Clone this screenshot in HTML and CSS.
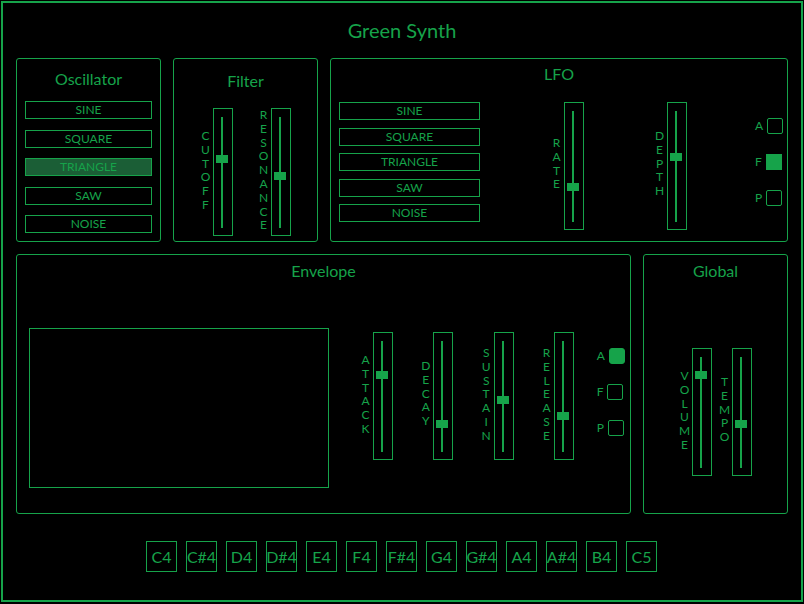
FILE: index.html
```html
<!DOCTYPE html>
<html>
<head>
<meta charset="utf-8">
<title>Green Synth</title>
<link rel="stylesheet" href="styles.css">
</head>
<body>
<div class="app">
  <h1 class="title">Green Synth</h1>

  <div class="row top">
    <section class="panel osc">
      <h2 class="ptitle">Oscillator</h2>
      <div class="btns osc-btns">
        <div class="btn">SINE</div>
        <div class="btn">SQUARE</div>
        <div class="btn active">TRIANGLE</div>
        <div class="btn">SAW</div>
        <div class="btn">NOISE</div>
      </div>
    </section>

    <section class="panel filter">
      <h2 class="ptitle">Filter</h2>
      <div class="filter-body">
        <div class="slider"><span class="vlabel">CUTOFF</span><div class="track"><span class="thumb" style="top:46px"></span></div></div>
        <div class="slider"><span class="vlabel">RESONANCE</span><div class="track"><span class="thumb" style="top:63px"></span></div></div>
      </div>
    </section>

    <section class="panel lfo">
      <h2 class="ptitle">LFO</h2>
      <div class="lfo-body">
        <div class="btns lfo-btns">
          <div class="btn">SINE</div>
          <div class="btn">SQUARE</div>
          <div class="btn">TRIANGLE</div>
          <div class="btn">SAW</div>
          <div class="btn">NOISE</div>
        </div>
        <div class="slider rate"><span class="vlabel">RATE</span><div class="track"><span class="thumb" style="top:80px"></span></div></div>
        <div class="slider depth"><span class="vlabel">DEPTH</span><div class="track"><span class="thumb" style="top:50px"></span></div></div>
        <div class="checks lfo-checks">
          <div class="check"><span>A</span><span class="box"></span></div>
          <div class="check"><span>F</span><span class="box on"></span></div>
          <div class="check"><span>P</span><span class="box"></span></div>
        </div>
      </div>
    </section>
  </div>

  <div class="row bottom">
    <section class="panel env">
      <h2 class="ptitle">Envelope</h2>
      <div class="env-body">
        <div class="canvas"></div>
        <div class="env-sliders">
          <div class="slider"><span class="vlabel">ATTACK</span><div class="track"><span class="thumb" style="top:38px"></span></div></div>
          <div class="slider"><span class="vlabel">DECAY</span><div class="track"><span class="thumb" style="top:87px"></span></div></div>
          <div class="slider"><span class="vlabel">SUSTAIN</span><div class="track"><span class="thumb" style="top:63px"></span></div></div>
          <div class="slider"><span class="vlabel">RELEASE</span><div class="track"><span class="thumb" style="top:79px"></span></div></div>
        </div>
        <div class="checks env-checks">
          <div class="check"><span>A</span><span class="box on round"></span></div>
          <div class="check"><span>F</span><span class="box"></span></div>
          <div class="check"><span>P</span><span class="box"></span></div>
        </div>
      </div>
    </section>

    <section class="panel global">
      <h2 class="ptitle">Global</h2>
      <div class="global-body">
        <div class="slider"><span class="vlabel">VOLUME</span><div class="track"><span class="thumb" style="top:22px"></span></div></div>
        <div class="slider"><span class="vlabel">TEMPO</span><div class="track"><span class="thumb" style="top:71px"></span></div></div>
      </div>
    </section>
  </div>

  <div class="keys">
    <div class="key">C4</div>
    <div class="key">C#4</div>
    <div class="key">D4</div>
    <div class="key">D#4</div>
    <div class="key">E4</div>
    <div class="key">F4</div>
    <div class="key">F#4</div>
    <div class="key">G4</div>
    <div class="key">G#4</div>
    <div class="key">A4</div>
    <div class="key">A#4</div>
    <div class="key">B4</div>
    <div class="key">C5</div>
  </div>
</div>
</body>
</html>
```

FILE: styles.css
```css
* {
  box-sizing: border-box;
  margin: 0;
  padding: 0;
}

body {
  background: #000;
  color: #16a34a;
  font-family: Lato, "Open Sans", sans-serif;
}

.app {
  margin: 1px;
  width: 802px;
  height: 601px;
  border: 2px solid #16a34a;
  padding: 0 13px;
}

.title {
  font-size: 20px;
  line-height: 24px;
  font-weight: 400;
  text-align: center;
  padding-top: 15px;
  height: 55px;
}

.row {
  display: flex;
  gap: 12px;
}

.panel {
  border: 1px solid #16a34a;
  border-radius: 3px;
}

.top .panel {
  height: 184px;
}

.bottom {
  margin-top: 12px;
}

.bottom .panel {
  height: 260px;
}

.osc,
.filter,
.global {
  width: 145px;
}

.lfo {
  width: 458px;
}

.env {
  width: 615px;
}

.ptitle {
  font-size: 16px;
  line-height: 20px;
  font-weight: 400;
  text-align: center;
}

.osc .ptitle {
  margin-top: 10px;
}

.filter .ptitle {
  margin-top: 12px;
}

.lfo .ptitle {
  margin-top: 5px;
}

.env .ptitle,
.global .ptitle {
  margin-top: 6px;
}

/* buttons */
.btns {
  display: flex;
  flex-direction: column;
}

.btn {
  height: 18px;
  border: 1px solid #16a34a;
  font-size: 12px;
  line-height: 16px;
  text-align: center;
}

.btn.active {
  background: #1b5e36;
}

.osc-btns {
  margin-top: 12px;
  padding: 0 8px;
  gap: 10.5px;
}

.lfo-btns {
  width: 141px;
  gap: 7.5px;
}

/* sliders */
.slider {
  display: flex;
  align-items: center;
  gap: 3px;
  height: 128px;
}

.vlabel {
  writing-mode: vertical-rl;
  text-orientation: upright;
  font-size: 12px;
  line-height: 10px;
  letter-spacing: -1.2px;
  padding-bottom: 6px;
}

.track {
  position: relative;
  flex: none;
  width: 20px;
  height: 128px;
  border: 1px solid #16a34a;
}

.track::before {
  content: "";
  position: absolute;
  left: 7px;
  top: 8px;
  bottom: 7px;
  width: 2px;
  background: #16a34a;
}

.thumb {
  position: absolute;
  left: 2px;
  width: 12px;
  height: 8px;
  background: #16a34a;
}

.filter-body {
  margin-top: 17px;
  display: flex;
  justify-content: center;
  gap: 25px;
}

/* LFO */
.lfo-body {
  margin-top: 18px;
  padding-left: 8px;
  display: flex;
  align-items: flex-start;
}

.rate {
  margin-left: 71px;
}

.depth {
  margin-left: 70px;
}

.lfo-checks {
  margin-left: 68px;
  margin-top: 16px;
}

/* checkboxes */
.checks {
  display: flex;
  flex-direction: column;
  gap: 20px;
}

.check {
  display: flex;
  align-items: center;
  gap: 4px;
  height: 16px;
  font-size: 12px;
  line-height: 16px;
}

.box {
  width: 16px;
  height: 16px;
  border: 1px solid #16a34a;
  border-radius: 2px;
}

.box.on {
  background: #16a34a;
  border-radius: 0;
}

.box.on.round {
  border-radius: 3px;
}

/* envelope */
.env-body {
  margin-top: 47px;
  padding-left: 12px;
  display: flex;
  align-items: flex-start;
}

.canvas {
  width: 300px;
  height: 160px;
  border: 1px solid #16a34a;
}

.env-sliders {
  display: flex;
  gap: 27.33px;
  margin-left: 31px;
  margin-top: 4px;
}

.env-checks {
  margin-left: 22.7px;
  margin-top: 20px;
}

/* global */
.global-body {
  margin-top: 67px;
  display: flex;
  justify-content: center;
  gap: 7px;
}

/* keys */
.keys {
  margin-top: 27px;
  padding-right: 1px;
  display: flex;
  justify-content: center;
  gap: 9px;
}

.key {
  width: 31px;
  height: 31px;
  border: 1px solid #16a34a;
  display: flex;
  align-items: center;
  justify-content: center;
  font-size: 16px;
  white-space: nowrap;
}
```
